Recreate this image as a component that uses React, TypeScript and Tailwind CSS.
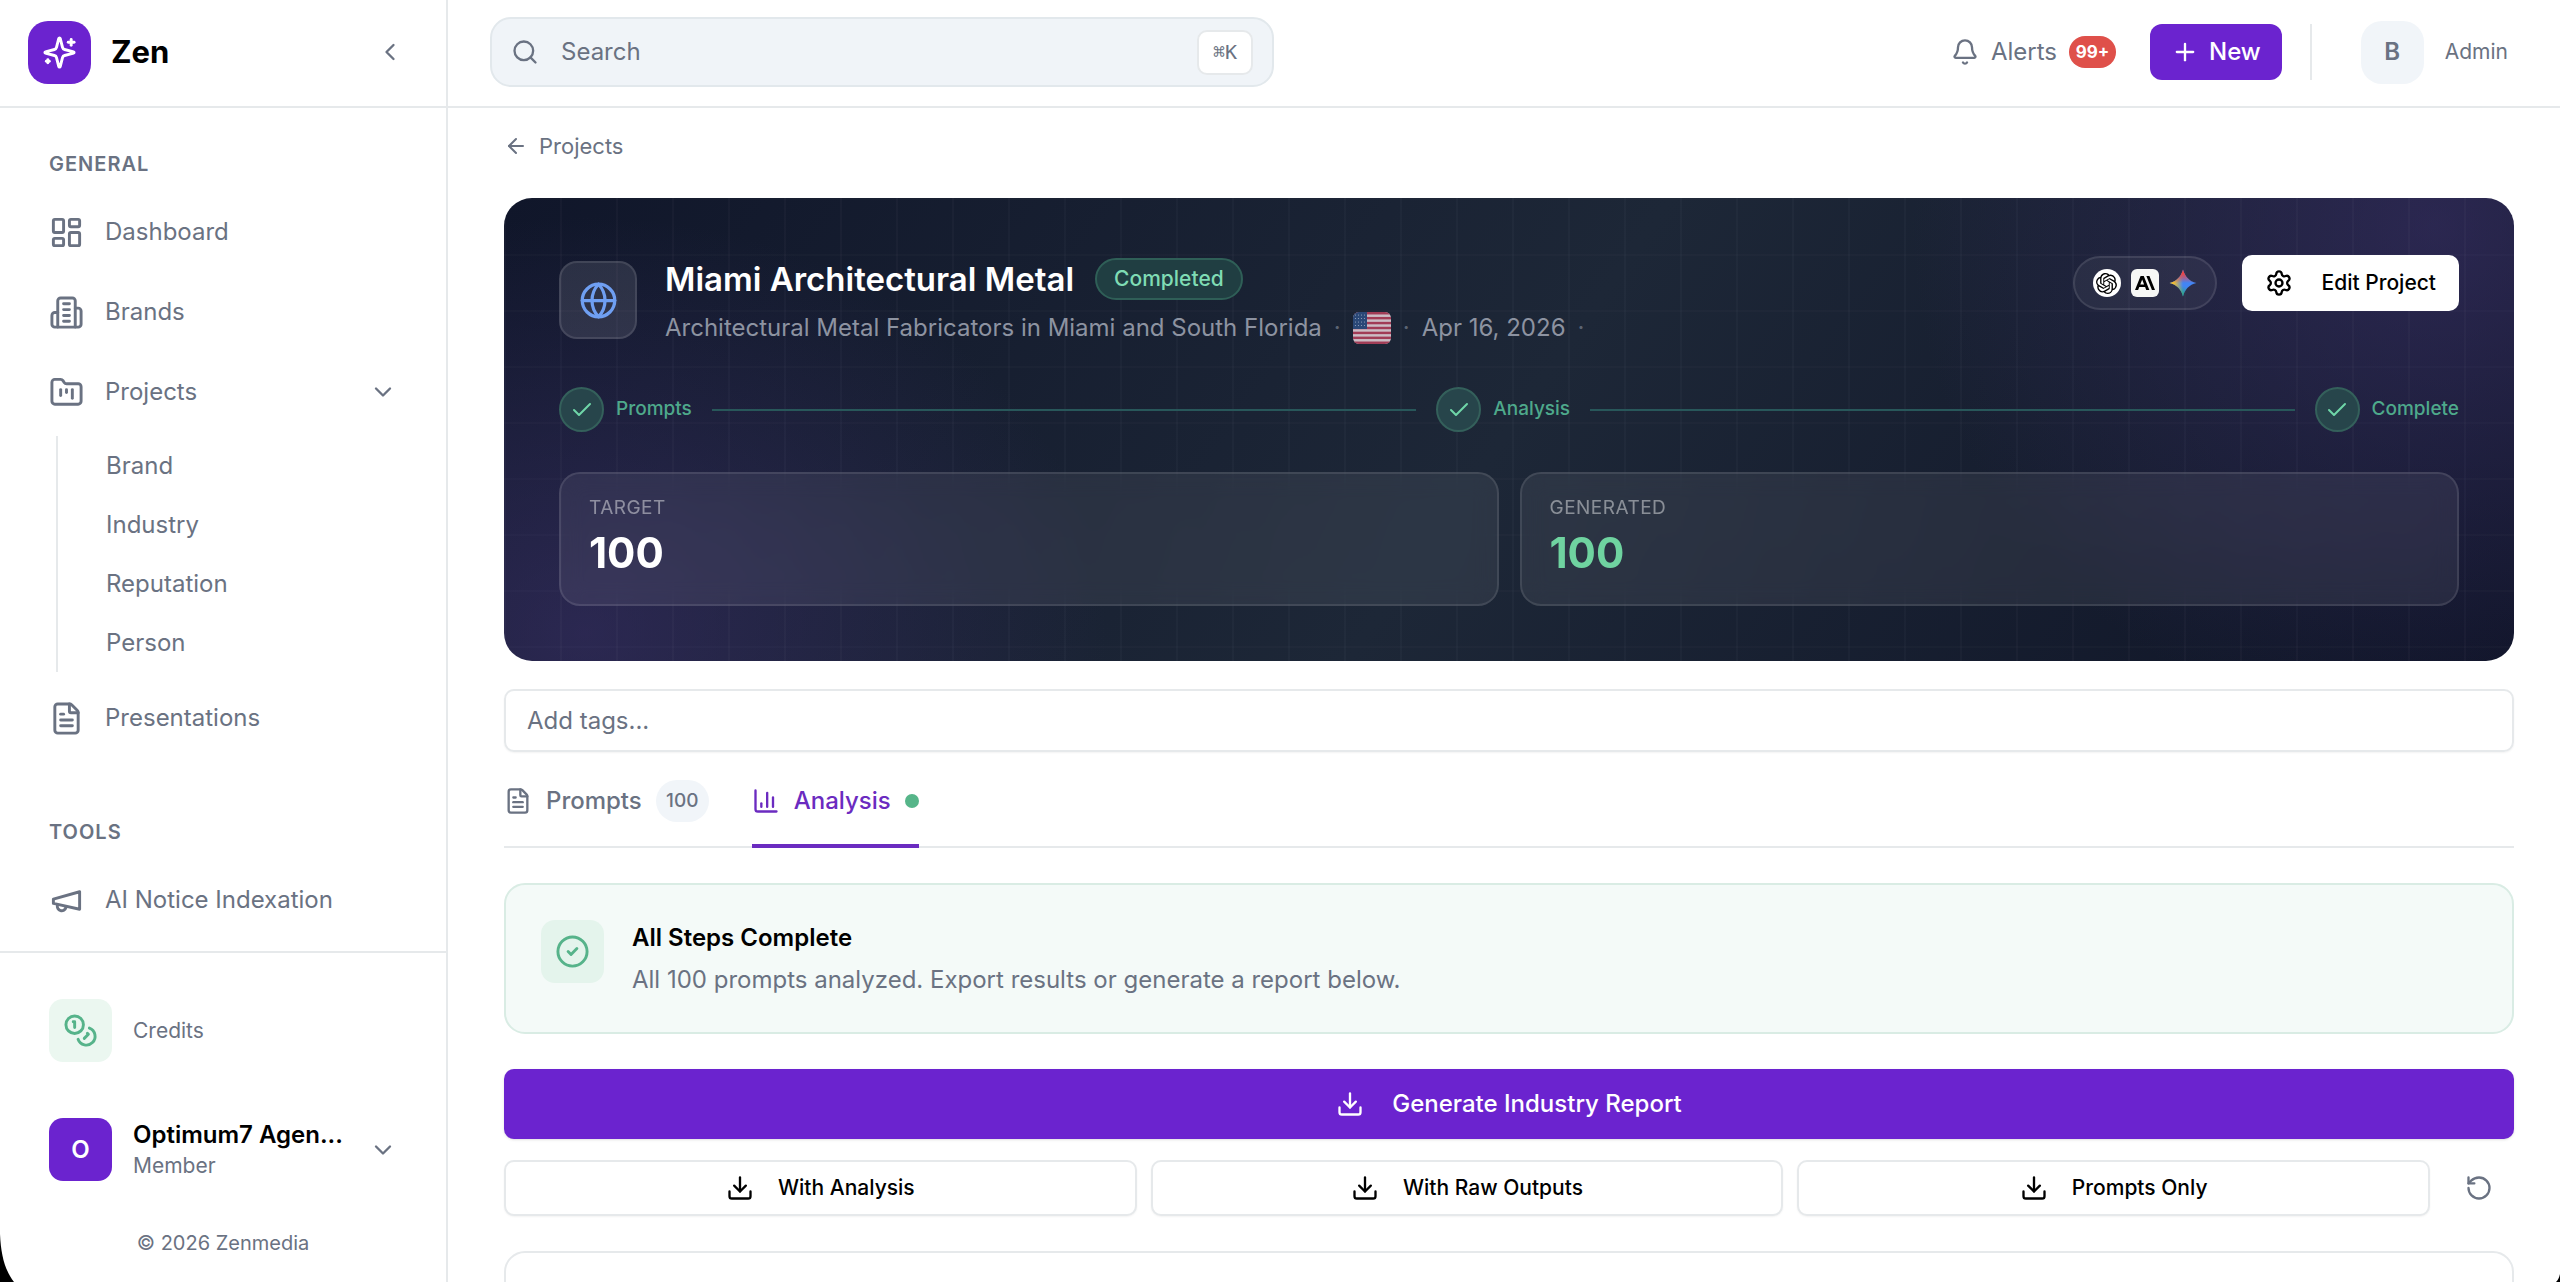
import type { ReactNode } from "react";
import {
  ArrowLeft,
  Bell,
  Check,
  ChevronDown,
  ChevronLeft,
  CircleCheck,
  Download,
  FileText,
  FolderKanban,
  Globe,
  LayoutDashboard,
  Plus,
  RotateCcw,
  Search,
  Settings,
} from "lucide-react";
import { SiAnthropic, SiOpenai } from "react-icons/si";

function LineIcon({ className, children }: { className: string; children: ReactNode }) {
  return (
    <svg
      viewBox="0 0 24 24"
      fill="none"
      stroke="currentColor"
      strokeWidth="2"
      strokeLinecap="round"
      strokeLinejoin="round"
      className={className}
      aria-hidden="true"
    >
      {children}
    </svg>
  );
}

function SparklesIcon() {
  return (
    <LineIcon className="size-[35px]">
      <path d="M9.937 15.5A2 2 0 0 0 8.5 14.063l-6.135-1.582a.5.5 0 0 1 0-.962L8.5 9.936A2 2 0 0 0 9.937 8.5l1.582-6.135a.5.5 0 0 1 .963 0L14.063 8.5A2 2 0 0 0 15.5 9.937l6.135 1.581a.5.5 0 0 1 0 .964L15.5 14.063a2 2 0 0 0-1.437 1.437l-1.582 6.135a.5.5 0 0 1-.963 0z" />
      <path d="M20 3v4" />
      <path d="M22 5h-4" />
      <path d="M4 17v2" />
      <path d="M5 18H3" />
    </LineIcon>
  );
}

function BuildingIcon() {
  return (
    <LineIcon className="size-[35px] shrink-0">
      <path d="M6 22V4a2 2 0 0 1 2-2h8a2 2 0 0 1 2 2v18Z" />
      <path d="M6 12H4a2 2 0 0 0-2 2v6a2 2 0 0 0 2 2h2" />
      <path d="M18 9h2a2 2 0 0 1 2 2v9a2 2 0 0 1-2 2h-2" />
      <path d="M10 6h4M10 10h4M10 14h4M10 18h4" />
    </LineIcon>
  );
}

function MegaphoneIcon() {
  return (
    <LineIcon className="size-[35px] shrink-0">
      <path d="m3 11 18-5v12L3 14v-3z" />
      <path d="M11.6 16.8a3 3 0 1 1-5.8-1.6" />
    </LineIcon>
  );
}

function CoinsIcon() {
  return (
    <LineIcon className="size-[35px]">
      <circle cx="8" cy="8" r="6" />
      <path d="M18.09 10.37A6 6 0 1 1 10.34 18" />
      <path d="M7 6h1v4" />
      <path d="m16.71 13.88.7.71-2.82 2.82" />
    </LineIcon>
  );
}

function ChartIcon() {
  return (
    <LineIcon className="size-7">
      <path d="M3 3v16a2 2 0 0 0 2 2h16" />
      <path d="M8 17v-3" />
      <path d="M13 17V5" />
      <path d="M18 17V9" />
    </LineIcon>
  );
}

function GeminiIcon() {
  return (
    <svg viewBox="0 0 24 24" className="size-7" role="img" aria-label="Gemini">
      <defs>
        <linearGradient id="gemTop" x1="0" y1="0" x2="0" y2="1">
          <stop offset="0.15" stopColor="#ef4444" />
          <stop offset="0.5" stopColor="#ef4444" stopOpacity="0" />
        </linearGradient>
        <linearGradient id="gemLeft" x1="0" y1="0" x2="1" y2="0">
          <stop offset="0.15" stopColor="#f5c02c" />
          <stop offset="0.5" stopColor="#f5c02c" stopOpacity="0" />
        </linearGradient>
        <linearGradient id="gemBottom" x1="0" y1="1" x2="0.3" y2="0">
          <stop offset="0.1" stopColor="#22b35a" />
          <stop offset="0.5" stopColor="#22b35a" stopOpacity="0" />
        </linearGradient>
      </defs>
      {["#4285f4", "url(#gemBottom)", "url(#gemLeft)", "url(#gemTop)"].map((fill) => (
        <path
          key={fill}
          fill={fill}
          d="M12 0.500C13.200 6 17.500 10.800 23.500 12 17.500 13.200 13.200 18 12 23.500 10.800 18 6.500 13.200 0.500 12 6.500 10.800 10.800 6 12 0.500z"
        />
      ))}
    </svg>
  );
}

function UsFlag() {
  return (
    <svg viewBox="0 0 38 32" className="h-8 w-[38px] rounded-md opacity-80" role="img" aria-label="United States">
      <rect width="38" height="32" fill="#f8e4ea" />
      {[0, 1, 2, 3, 4, 5, 6].map((i) => (
        <rect key={i} y={i * 4.92} width="38" height="2.460" fill="#c3435f" />
      ))}
      <rect width="14" height="17" fill="#2f5288" />
      {[3, 6.5, 10, 13.5].map((y) =>
        [2.5, 5.5, 8.5, 11.5].map((x) => <circle key={`${x}-${y}`} cx={x} cy={y} r="0.6" fill="#b9c8e2" />)
      )}
    </svg>
  );
}

function NavItem({ icon, label }: { icon: ReactNode; label: string }) {
  return (
    <a href="#" className="flex h-20 items-center gap-[21px] text-2xl text-gray-500">
      {icon}
      {label}
    </a>
  );
}

function Sidebar() {
  return (
    <aside className="flex w-[448px] shrink-0 flex-col border-r-2 border-[#e6e9eb]">
      <div className="flex h-[108px] shrink-0 items-center border-b-2 border-[#e6e9eb] pr-[42px] pb-[2px] pl-7">
        <div className="flex size-[63px] items-center justify-center rounded-[20px] bg-[#6b23cf] text-white">
          <SparklesIcon />
        </div>
        <span className="ml-5 text-[31px] font-bold text-black">Zen</span>
        <button type="button" aria-label="Collapse sidebar" className="ml-auto text-gray-500">
          <ChevronLeft className="size-7" />
        </button>
      </div>

      <nav className="min-h-0 flex-1 overflow-hidden px-[49px] pt-[42px]">
        <h2 className="mb-[14px] text-xl leading-7 font-semibold tracking-wider text-gray-500">GENERAL</h2>
        <NavItem icon={<LayoutDashboard className="size-[35px] shrink-0" />} label="Dashboard" />
        <NavItem icon={<BuildingIcon />} label="Brands" />
        <button type="button" className="flex h-20 w-full items-center gap-[21px] text-2xl text-gray-500">
          <FolderKanban className="size-[35px] shrink-0" />
          Projects
          <ChevronDown className="ml-auto size-7" />
        </button>
        <ul className="mt-1 ml-[7px] border-l-2 border-[#e6e9eb] pl-12">
          {["Brand", "Industry", "Reputation", "Person"].map((label) => (
            <li key={label} className="flex h-[59px] items-center">
              <a href="#" className="text-2xl text-gray-500">
                {label}
              </a>
            </li>
          ))}
        </ul>
        <div className="mt-[6px]">
          <NavItem icon={<FileText className="size-[35px] shrink-0" />} label="Presentations" />
        </div>
        <h2 className="mt-[60px] mb-[14px] text-xl leading-7 font-semibold tracking-wider text-gray-500">TOOLS</h2>
        <NavItem icon={<MegaphoneIcon />} label="AI Notice Indexation" />
      </nav>

      <div className="flex h-[331px] shrink-0 flex-col border-t-2 border-[#e6e9eb] px-[49px] pt-[46px]">
        <div className="flex items-center gap-[21px]">
          <div className="flex size-[63px] items-center justify-center rounded-[14px] bg-[#ebf7f0] text-[#56b38a]">
            <CoinsIcon />
          </div>
          <span className="text-[21px] text-gray-500">Credits</span>
        </div>
        <button type="button" className="mt-14 flex items-center gap-[21px] text-left">
          <span className="flex size-[63px] items-center justify-center rounded-[14px] bg-[#6b23cf] text-2xl font-semibold text-white">
            O
          </span>
          <span className="flex flex-col">
            <span className="text-2xl leading-8 font-semibold text-black">Optimum7 Agen...</span>
            <span className="text-[21px] leading-[30px] text-gray-500">Member</span>
          </span>
          <ChevronDown className="ml-auto size-7 text-gray-500" />
        </button>
        <p className="mt-12 text-center text-xl leading-7 text-gray-500">© 2026 Zenmedia</p>
      </div>
    </aside>
  );
}

function TopBar() {
  return (
    <header className="flex h-[108px] shrink-0 items-center border-b-2 border-[#e6e9eb] pr-[52px] pb-[2px] pl-[42px]">
      <label className="flex h-[70px] w-[784px] items-center rounded-[21px] border-2 border-[#e2e8ec] bg-[#f0f4f8] pr-[19px] pl-[19px]">
        <Search className="size-7 shrink-0 text-gray-500" />
        <input
          type="search"
          aria-label="Search"
          placeholder="Search"
          className="ml-[22px] min-w-0 flex-1 bg-transparent text-2xl outline-none placeholder:text-gray-500"
        />
        <kbd className="flex h-[45px] w-14 items-center justify-center rounded-[10px] border-2 border-[#e6e9eb] bg-white font-['DejaVu_Sans_Mono',monospace] text-xl text-gray-500">
          ⌘K
        </kbd>
      </label>

      <button type="button" className="ml-auto flex items-center gap-3 text-2xl text-gray-500">
        <Bell className="size-7" />
        Alerts
        <span className="flex h-8 w-[47px] items-center justify-center rounded-full bg-[#df504a] text-[17px] font-bold text-white">
          99+
        </span>
      </button>
      <button
        type="button"
        className="ml-[34px] flex h-14 items-center gap-[10px] rounded-[12px] bg-[#6b23cf] px-[21px] text-2xl font-medium text-white"
      >
        <Plus className="size-7" />
        New
      </button>
      <div className="ml-[28px] h-14 w-0 border-l-2 border-[#e6e9eb]" />
      <div className="ml-[49px] flex size-[63px] items-center justify-center rounded-[21px] bg-[#f1f5f9] text-2xl font-semibold text-gray-500">
        B
      </div>
      <span className="ml-[21px] text-[21px] text-gray-500">Admin</span>
    </header>
  );
}

function Step({ label }: { label: string }) {
  return (
    <li className="flex items-center gap-3 text-[19px] font-medium text-[#4ea98b]">
      <span className="flex size-[45px] items-center justify-center rounded-full border-2 border-[#34605b] bg-[#27454b] text-[#6fd6a8]">
        <Check className="size-6" />
      </span>
      {label}
    </li>
  );
}

function Stat({ label, value, valueClass }: { label: string; value: string; valueClass: string }) {
  return (
    <div className="rounded-[21px] border-2 border-white/10 bg-white/[0.07] px-7 pt-5 pb-7 backdrop-blur-md">
      <p className="text-[19px] leading-7 tracking-wide text-white/45">{label}</p>
      <p className={valueClass}>{value}</p>
    </div>
  );
}

function Hero() {
  return (
    <section className="relative overflow-hidden rounded-[28px] bg-[radial-gradient(ellipse_26%_110%_at_96%_6%,rgba(66,52,116,0.5),transparent),radial-gradient(ellipse_26%_90%_at_4%_94%,rgba(66,52,116,0.5),transparent),linear-gradient(125deg,#10162a_0%,#1d2737_50%,#0f1427_100%)] p-[55px]">
      <div className="pointer-events-none absolute inset-0 bg-[linear-gradient(rgba(255,255,255,0.015)_2px,transparent_2px),linear-gradient(90deg,rgba(255,255,255,0.025)_2px,transparent_2px)] bg-[size:56px_56px]" />
      <div className="relative">
        <div className="flex items-start">
          <div className="mt-2 flex size-[78px] shrink-0 items-center justify-center rounded-[18px] border-2 border-white/10 bg-white/10 text-[#6f9ff2]">
            <Globe className="size-[39px]" />
          </div>
          <div className="ml-7">
            <div className="mt-[5px] flex items-center gap-[21px]">
              <h1 className="text-[33px] leading-[42px] font-semibold text-white">Miami Architectural Metal</h1>
              <span className="flex h-[42px] items-center rounded-full border-2 border-[#2f5f57] bg-[#203e42] px-[17px] text-[21px] font-medium text-[#7fdcb4]">
                Completed
              </span>
            </div>
            <div className="mt-3 flex h-8 items-center gap-3 text-2xl text-[#8d93a1]">
              <span>Architectural Metal Fabricators in Miami and South Florida</span>
              <span className="text-[#5c6473]">·</span>
              <UsFlag />
              <span className="text-[#5c6473]">·</span>
              <span>Apr 16, 2026</span>
              <span className="text-[#5c6473]">·</span>
            </div>
          </div>
          <div className="mt-[2px] ml-auto flex items-center gap-[25px]">
            <div className="flex h-[54px] items-center gap-[10px] rounded-full border-2 border-white/10 bg-white/5 px-[18px]">
              <span className="flex size-7 items-center justify-center rounded-full bg-white text-black">
                <SiOpenai className="size-[21px]" title="OpenAI" />
              </span>
              <span className="flex size-7 items-center justify-center rounded-md bg-[#f6f7f5] text-black">
                <SiAnthropic className="size-5" title="Anthropic" />
              </span>
              <GeminiIcon />
            </div>
            <button
              type="button"
              className="flex h-14 items-center gap-[29px] rounded-[10px] bg-white px-[23px] text-[21px] font-medium text-black"
            >
              <Settings className="size-7" />
              Edit Project
            </button>
          </div>
        </div>

        <ol className="mt-[43px] flex items-center gap-[20px]">
          <Step label="Prompts" />
          <li aria-hidden="true" className="h-[2px] flex-1 bg-[#28575a]" />
          <Step label="Analysis" />
          <li aria-hidden="true" className="h-[2px] flex-1 bg-[#28575a]" />
          <Step label="Complete" />
        </ol>

        <div className="mt-10 grid grid-cols-2 gap-[21px]">
          <Stat label="TARGET" value="100" valueClass="mt-2 text-[42px] leading-[46px] font-bold text-white" />
          <Stat label="GENERATED" value="100" valueClass="mt-2 text-[42px] leading-[46px] font-bold text-[#6fd3a0]" />
        </div>
      </div>
    </section>
  );
}

function Tabs() {
  return (
    <div role="tablist" className="mt-7 flex gap-[43px] border-b-2 border-[#e6e9eb]">
      <button
        type="button"
        role="tab"
        aria-selected="false"
        className="-mb-[2px] flex h-[68px] items-start text-2xl font-medium text-gray-500"
      >
        <span className="flex h-[42px] items-center gap-[14px]">
          <FileText className="size-7" />
          Prompts
          <span className="flex h-[42px] w-[53px] items-center justify-center rounded-full bg-[#f1f5f9] text-[19px]">
            100
          </span>
        </span>
      </button>
      <button
        type="button"
        role="tab"
        aria-selected="true"
        className="-mb-[2px] flex h-[68px] items-start border-b-4 border-[#6b2bc0] text-2xl font-medium text-[#6b2bc0]"
      >
        <span className="flex h-[42px] items-center gap-[14px]">
          <ChartIcon />
          Analysis
          <span className="size-[14px] rounded-full bg-[#56b589]" />
        </span>
      </button>
    </div>
  );
}

function ExportButton({ label }: { label: string }) {
  return (
    <button
      type="button"
      className="flex h-14 flex-1 items-center justify-center gap-6 rounded-[10px] border-2 border-[#e6e9eb] bg-white text-[21px] font-medium text-black shadow-xs"
    >
      <Download className="size-7" />
      {label}
    </button>
  );
}

export default function App() {
  return (
    <div className="relative flex h-screen overflow-hidden bg-white font-['Inter',sans-serif]">
      <Sidebar />
      <div className="flex min-w-0 flex-1 flex-col">
        <TopBar />
        <main className="min-h-0 flex-1 overflow-hidden pt-[22px] pr-[46px] pl-14">
          <a href="#" className="mb-9 flex w-fit items-center gap-[11px] text-[22px] leading-8 text-gray-500">
            <ArrowLeft className="size-6" />
            Projects
          </a>
          <Hero />
          <input
            type="text"
            aria-label="Add tags"
            placeholder="Add tags..."
            className="mt-7 block h-[63px] w-full rounded-[10px] border-2 border-[#e6e9eb] px-[21px] text-2xl shadow-xs outline-none placeholder:text-gray-500"
          />
          <Tabs />

          <section className="mt-[35px] flex items-start gap-7 rounded-[21px] border-2 border-[#d9ece4] bg-[#f4faf8] p-[35px]">
            <div className="flex size-[63px] shrink-0 items-center justify-center rounded-[14px] bg-[#e4f4ec] text-[#56b38a]">
              <CircleCheck className="size-[35px]" />
            </div>
            <div>
              <h2 className="text-2xl leading-[35px] font-semibold text-black">All Steps Complete</h2>
              <p className="mt-[7px] text-2xl leading-[35px] text-gray-500">
                All 100 prompts analyzed. Export results or generate a report below.
              </p>
            </div>
          </section>

          <button
            type="button"
            className="mt-[35px] flex h-[70px] w-full items-center justify-center gap-7 rounded-[10px] bg-[#6b23cf] text-2xl font-medium text-white shadow-sm"
          >
            <Download className="size-7" />
            Generate Industry Report
          </button>
          <div className="mt-[21px] flex gap-[14px]">
            <ExportButton label="With Analysis" />
            <ExportButton label="With Raw Outputs" />
            <ExportButton label="Prompts Only" />
            <button type="button" aria-label="Reset" className="flex w-[70px] items-center justify-center text-gray-500">
              <RotateCcw className="size-7" />
            </button>
          </div>
          <section aria-label="Results" className="mt-[35px] h-64 rounded-[21px] border-2 border-[#e6e9eb]" />
        </main>
      </div>

      <svg viewBox="0 0 14 48" className="pointer-events-none absolute bottom-0 left-0 h-12 w-[14px]" aria-hidden="true">
        <path d="M0 0C1 22 5 36 14 48H0z" fill="#000" />
      </svg>
      <svg viewBox="0 0 4 8" className="pointer-events-none absolute right-0 bottom-0 h-2 w-1" aria-hidden="true">
        <path d="M4 0C3 4 2 6 0 8H4z" fill="#000" />
      </svg>
    </div>
  );
}
